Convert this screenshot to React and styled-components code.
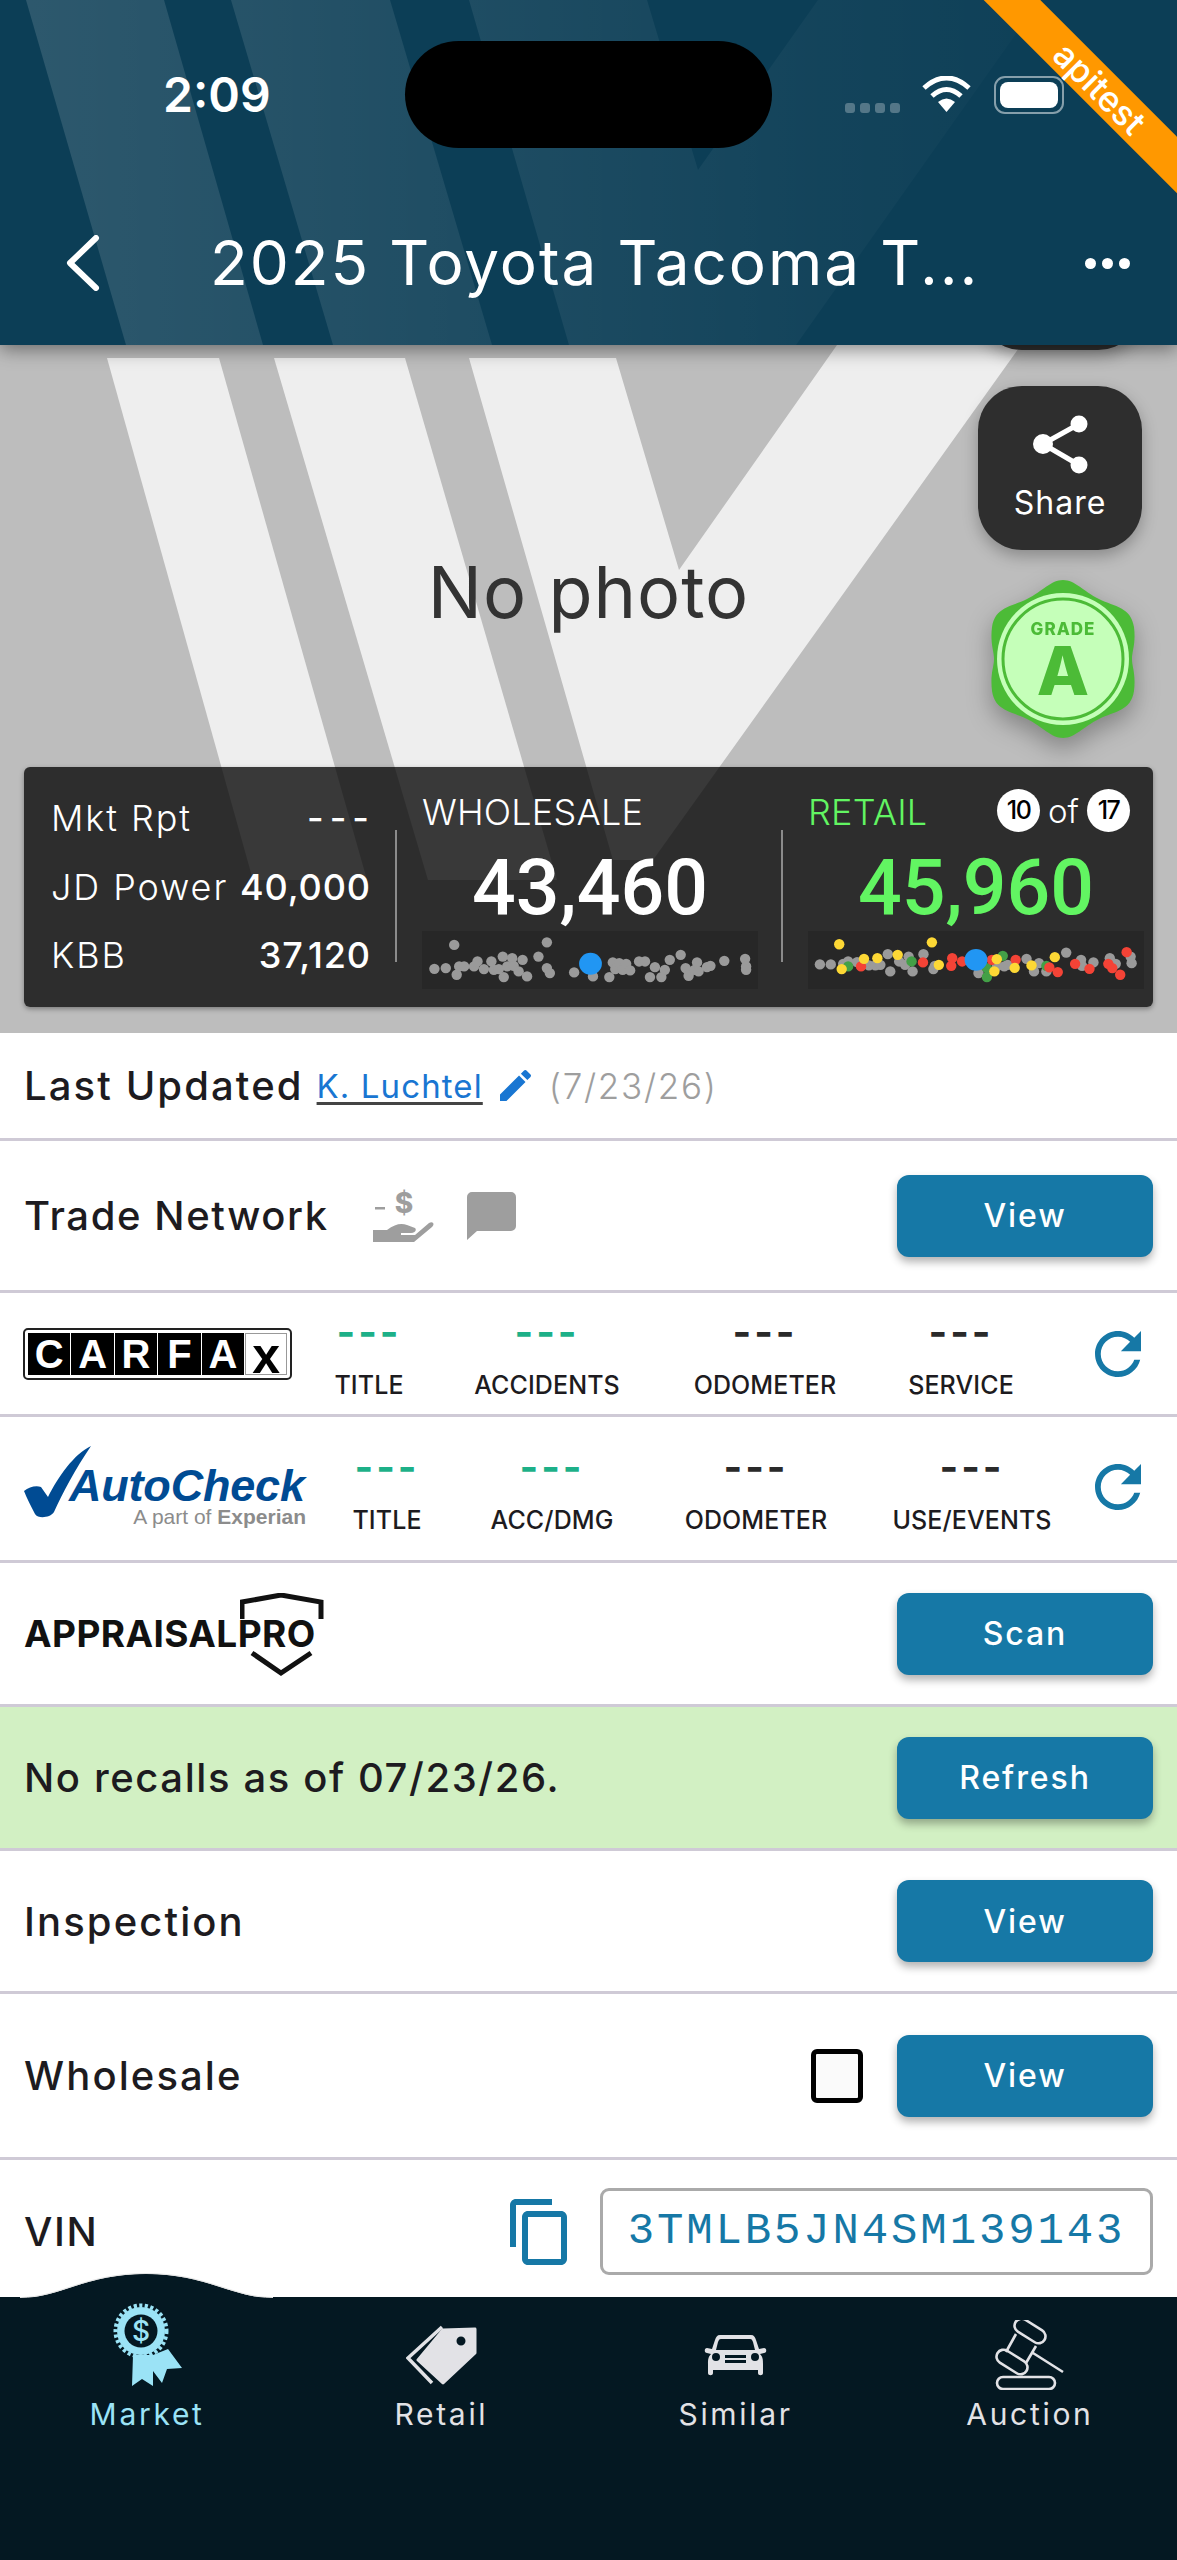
import React from "react";
import styled, { createGlobalStyle } from "styled-components";

const UI_FONT = `Inter, "Noto Sans", sans-serif`;
const BRAND_BLUE = "#1678a6";

const GlobalStyle = createGlobalStyle`
  html, body { margin: 0; padding: 0; background: #fff; }
  * { box-sizing: border-box; }
`;

const Screen = styled.div`
  position: relative;
  width: 1177px;
  height: 2560px;
  overflow: hidden;
  display: flex;
  flex-direction: column;
  background: #fff;
  font-family: ${UI_FONT};
  color: #1d1b20;
`;

/* ---------- header ---------- */
const Header = styled.header`
  position: relative;
  z-index: 2;
  height: 345px;
  flex: none;
  overflow: hidden;
  background: #0c3e56;
  box-shadow: 0 4px 18px rgba(0, 0, 0, 0.45);
`;
const Watermark = styled.svg`
  position: absolute;
  left: 0;
  top: 0;
`;
const StatusBar = styled.div`
  position: relative;
  height: 148px;
  padding-top: 41px;
  display: grid;
  grid-template-columns: 405px 367px 1fr;
`;
const Clock = styled.div`
  padding: 10px 0 0 163px;
  font-size: 48px;
  font-weight: 600;
  line-height: 88px;
  color: #fff;
`;
const Island = styled.div`
  height: 107px;
  border-radius: 54px;
  background: #000;
`;
const StatusIcons = styled.div`
  display: flex;
  align-items: flex-start;
  padding: 35px 0 0 73px;
`;
const SignalDots = styled.div`
  display: flex;
  gap: 5px;
  margin: 27px 22px 0 0;
`;
const SignalDot = styled.span`
  width: 10px;
  height: 10px;
  border-radius: 3px;
  background: rgba(255, 255, 255, 0.28);
`;
const Battery = styled.div`
  width: 70px;
  height: 38px;
  margin-left: 23px;
  padding: 4px;
  border: 2px solid rgba(255, 255, 255, 0.5);
  border-radius: 11px;
`;
const BatteryFill = styled.div`
  height: 100%;
  border-radius: 8px;
  background: #fff;
`;
const AppBar = styled.div`
  position: relative;
  display: flex;
  align-items: center;
  height: 197px;
  padding: 33px 47px 0 66px;
`;
const Title = styled.h1`
  flex: 1;
  margin: 0 0 0 110px;
  font-size: 62px;
  font-weight: 400;
  letter-spacing: 1.9px;
  line-height: 80px;
  white-space: nowrap;
  color: #fff;
`;
const MoreDots = styled.div`
  display: flex;
  gap: 6px;
`;
const MoreDot = styled.span`
  width: 11px;
  height: 11px;
  border-radius: 50%;
  background: #fff;
`;
const Ribbon = styled.div`
  position: absolute;
  left: 900px;
  top: 68px;
  width: 400px;
  height: 40px;
  transform: rotate(45deg);
  background: #ff9800;
  color: #fff;
  font-size: 35px;
  font-weight: 500;
  line-height: 40px;
  text-align: center;
`;

/* ---------- hero ---------- */
const Hero = styled.section`
  position: relative;
  height: 688px;
  flex: none;
  background: #bdbdbd;
`;
const NoPhoto = styled.div`
  position: absolute;
  left: 0;
  right: 0;
  top: 198px;
  text-align: center;
  font-size: 72px;
  letter-spacing: 1px;
  line-height: 98px;
  color: #333;
`;
const FloatStack = styled.div`
  position: absolute;
  right: 35px;
  top: -159px;
  width: 164px;
  display: flex;
  flex-direction: column;
  align-items: center;
`;
const FloatButton = styled.div`
  width: 164px;
  height: 164px;
  margin-bottom: ${(p) => p.$gap}px;
  padding-top: 29px;
  border-radius: 44px;
  background: #2e2e2e;
  box-shadow: 0 6px 16px rgba(0, 0, 0, 0.28);
  display: flex;
  flex-direction: column;
  align-items: center;
  color: #fff;
  font-size: 32px;
  font-weight: 400;
  letter-spacing: 1px;
`;
const FloatLabel = styled.span`
  margin-top: 8px;
  line-height: 40px;
`;
const GradeSeal = styled.svg`
  margin-left: 6px;
  filter: drop-shadow(0 10px 12px rgba(0, 0, 0, 0.3));
`;
const PricePanel = styled.div`
  position: absolute;
  left: 24px;
  right: 24px;
  top: 422px;
  height: 240px;
  border-radius: 6px;
  background: rgba(0, 0, 0, 0.76);
  box-shadow: 0 2px 5px rgba(0, 0, 0, 0.35);
  display: flex;
  color: #fff;
`;
const Sources = styled.div`
  width: 371px;
  flex: none;
  padding: 17px 25px 0 27px;
`;
const SourceRow = styled.div`
  display: flex;
  justify-content: space-between;
  align-items: center;
  height: 68.5px;
  font-size: 36px;
  font-weight: 300;
  letter-spacing: 1.9px;
  white-space: nowrap;
`;
const SourceValue = styled.span`
  font-weight: 500;
  letter-spacing: ${(p) => (p.$dashes ? 6 : 0.9)}px;
  margin-right: ${(p) => (p.$dashes ? -5 : -1)}px;
`;
const PanelRule = styled.div`
  width: 2px;
  height: 132px;
  margin-top: 63px;
  flex: none;
  background: #8b8b8b;
`;
const PriceColumn = styled.div`
  position: relative;
  width: ${(p) => p.$width}px;
  flex: none;
  padding: 22px 0 0 ${(p) => p.$inset}px;
  color: ${(p) => p.$color};
`;
const PriceHeading = styled.div`
  display: flex;
  align-items: center;
  height: 46px;
  font-size: 36px;
  font-weight: 300;
  letter-spacing: 0.2px;
`;
const PriceValue = styled.div`
  width: 336px;
  margin-top: 16px;
  font-family: Roboto, sans-serif;
  font-size: 77px;
  font-weight: 500;
  line-height: 74px;
  text-align: center;
`;
const ScatterStrip = styled.svg`
  display: block;
  margin-top: 6px;
  background: #272727;
`;
const RankBadge = styled.div`
  position: absolute;
  top: 22px;
  right: 23px;
  display: flex;
  align-items: center;
  gap: 8px;
  color: #fff;
  font-size: 33px;
  font-weight: 300;
`;
const RankCount = styled.span`
  width: 43px;
  height: 43px;
  border-radius: 50%;
  background: #fff;
  color: #000;
  font-size: 25px;
  font-weight: 500;
  letter-spacing: -1.5px;
  line-height: 43px;
  text-align: center;
`;

/* ---------- list rows ---------- */
const Row = styled.div`
  display: flex;
  align-items: center;
  height: ${(p) => p.$height}px;
  flex: none;
  padding: ${(p) => p.$top ?? 0}px ${(p) => p.$right ?? 24}px 0 24px;
  background: ${(p) => p.$tint ?? "#fff"};
  border-bottom: ${(p) => (p.$last ? "0" : "3px solid #cfcad6")};
`;
const RowLabel = styled.span`
  font-size: 40px;
  font-weight: 500;
  letter-spacing: ${(p) => p.$spacing ?? 1.6}px;
  white-space: nowrap;
`;
const Spacer = styled.div`
  flex: 1;
`;
const ActionButton = styled.button`
  width: 256px;
  height: 82px;
  flex: none;
  padding: 0;
  border: 0;
  border-radius: 12px;
  background: ${BRAND_BLUE};
  box-shadow: 0 5px 9px rgba(0, 0, 0, 0.3);
  color: #fff;
  font-family: ${UI_FONT};
  font-size: 32px;
  font-weight: 500;
  letter-spacing: 1.9px;
`;
const UpdatedBy = styled.a`
  margin-left: 13px;
  color: #1976d2;
  font-size: 33px;
  letter-spacing: 1.1px;
  text-decoration: underline;
  text-decoration-color: #444;
  text-underline-offset: 4px;
`;
const UpdatedDate = styled.span`
  margin-left: 18px;
  color: #9e9e9e;
  font-size: 35px;
  font-weight: 300;
  letter-spacing: 1.7px;
`;
const IconSvg = styled.svg`
  flex: none;
  margin-left: ${(p) => p.$left ?? 0}px;
`;

const ReportCol = styled.div`
  width: ${(p) => p.$width}px;
  flex: none;
  padding-top: 12px;
  display: flex;
  flex-direction: column;
  align-items: center;
`;
const Dash = styled.div`
  height: 30px;
  margin-bottom: 21px;
  color: ${(p) => (p.$good ? "#1db088" : "#2a2a2a")};
  font-size: 40px;
  font-weight: 700;
  letter-spacing: 3px;
  line-height: 26px;
`;
const ReportLabel = styled.div`
  font-size: 25px;
  font-weight: 500;
  letter-spacing: 0.1px;
  line-height: 30px;
  white-space: nowrap;
`;
const RefreshButton = styled.svg`
  margin-left: auto;
  margin-top: ${(p) => p.$offset}px;
  flex: none;
  fill: ${BRAND_BLUE};
`;

const CarfaxLogo = styled.div`
  width: 269px;
  height: 52px;
  margin-left: -1px;
  flex: none;
  padding: 3px;
  display: flex;
  gap: 1px;
  border: 2px solid #222;
  border-radius: 5px;
  background: #fff;
`;
const CarfaxCell = styled.span`
  flex: ${(p) => (p.$light ? "0 0 42px" : "1")};
  display: flex;
  align-items: ${(p) => (p.$light ? "flex-end" : "center")};
  justify-content: center;
  overflow: hidden;
  background: ${(p) => (p.$light ? "#fff" : "#000")};
  border: ${(p) => (p.$light ? "1px solid #999" : "0")};
  color: ${(p) => (p.$light ? "#000" : "#fff")};
  font-family: "Liberation Sans", sans-serif;
  font-size: ${(p) => (p.$light ? 50 : 40)}px;
  font-weight: 700;
  line-height: ${(p) => (p.$light ? "36px" : "1")};
`;

const AutoCheckLogo = styled.div`
  position: relative;
  width: 284px;
  height: 82px;
  flex: none;
  margin-top: -4px;
`;
const AutoCheckName = styled.div`
  position: absolute;
  left: 45px;
  top: 15px;
  color: #004b93;
  font-family: "Liberation Sans", sans-serif;
  font-size: 45px;
  font-style: italic;
  font-weight: 700;
  line-height: 50px;
  letter-spacing: -0.2px;
`;
const ExperianLine = styled.div`
  position: absolute;
  right: 2px;
  top: 58px;
  color: #8c8c8c;
  font-family: "Liberation Sans", sans-serif;
  font-size: 21px;
  line-height: 26px;
  white-space: nowrap;
  b { font-weight: 700; }
`;
const AppraisalLogo = styled.div`
  position: relative;
  width: 300px;
  height: 82px;
  display: flex;
  align-items: center;
  font-family: Inter, sans-serif;
  font-size: 37px;
  font-weight: 700;
  color: #111;
  letter-spacing: 0.4px;
  white-space: nowrap;
`;
const ShieldMark = styled.svg`
  position: absolute;
  left: 216px;
  top: 0;
`;

const Checkbox = styled.span`
  width: 52px;
  height: 54px;
  margin-right: 34px;
  border: 5px solid #000;
  border-radius: 6px;
  background: #fafafa;
`;
const VinField = styled.div`
  width: 553px;
  height: 87px;
  margin-left: 33px;
  border: 3px solid #aaa;
  border-radius: 9px;
  text-align: center;
  color: ${BRAND_BLUE};
  font-family: "Liberation Mono", monospace;
  font-size: 44px;
  letter-spacing: 2.85px;
  line-height: 81px;
`;

/* ---------- bottom nav ---------- */
const BottomNav = styled.nav`
  position: absolute;
  left: 0;
  right: 0;
  top: 2297px;
  height: 263px;
  z-index: 3;
  background: #041822;
  display: grid;
  grid-template-columns: repeat(4, 1fr);
  align-items: start;
`;
const NavBump = styled.svg`
  position: absolute;
  left: 0;
  top: -24px;
`;
const NavItem = styled.div`
  position: relative;
  display: flex;
  flex-direction: column;
  align-items: center;
  color: ${(p) => (p.$active ? "#9be3f6" : "#e2e2e6")};
`;
const NavIconSlot = styled.div`
  height: 95px;
  padding-top: ${(p) => (p.$active ? 0 : 21)}px;
  display: flex;
  align-items: center;
`;
const NavLabel = styled.span`
  font-size: 30px;
  font-weight: 400;
  letter-spacing: 2.7px;
  line-height: 44px;
`;

/* ---------- data ---------- */
const WHOLESALE_DOTS = [
  [105,555],[292,547],[65,627],[88,625],[110,645],[115,620],[125,620],[145,620],[152,605],[165,628],
  [180,605],[185,630],[195,628],[203,590],[205,652],[212,620],[222,595],[225,618],[235,635],[243,600],
  [252,650],[275,590],[292,625],[298,640],[347,638],[385,650],[418,652],[425,608],[430,628],[438,610],
  [445,630],[452,612],[460,632],[478,605],[490,605],[510,622],[500,652],[523,652],[530,630],[540,600],
  [562,585],[572,625],[578,648],[590,630],[595,608],[598,635],[615,622],[622,618],[650,603],[692,597],
  [694,620],[694,630],
];
const RETAIL_GRAY = [
  [843,614],[865,614],[890,612],[900,605],[918,607],[942,617],[955,617],[965,615],[980,583],[985,635],
  [1003,605],[1015,615],[1022,590],[1030,635],[1052,583],[1075,618],[1072,628],[1163,640],[1200,620],
  [1215,620],[1222,615],[1260,597],[1275,635],[1285,610],[1300,635],[1340,578],[1370,600],[1372,618],
  [1395,608],[1428,595],[1470,590],[1472,610],[1440,612],
];
const RETAIL_GREEN = [[1180,652],[1180,625],[1212,588],[900,620],[1028,605],[1300,618]];
const RETAIL_RED = [
  [926,620],[1051,608],[1110,595],[1108,618],[1130,605],[1190,600],[1238,600],[1306,623],[1323,637],
  [1358,612],[1387,627],[1425,612],[1433,625],[1449,645],[1462,577],
];
const RETAIL_YELLOW = [
  [882,553],[1069,547],[887,628],[932,597],[959,595],[1000,585],[1083,615],[1195,635],[1236,624],
  [1270,617],[1317,592],[1200,598],
];

const Dots = ({ points, color }) =>
  points.map(([x, y]) => (
    <ellipse key={`${x}-${y}`} cx={x} cy={y} rx={10.5} ry={15.5} fill={color} />
  ));

const WholesaleScatter = () => (
  <ScatterStrip width={336} height={58} viewBox="40 513 678 175" preserveAspectRatio="none">
    <Dots points={WHOLESALE_DOTS} color="#9a9a9a" />
    <ellipse cx={380} cy={612} rx={23} ry={33} fill="#2196f3" />
  </ScatterStrip>
);
const RetailScatter = () => (
  <ScatterStrip width={336} height={58} viewBox="819 513 678 175" preserveAspectRatio="none">
    <Dots points={RETAIL_GRAY} color="#9a9a9a" />
    <Dots points={RETAIL_GREEN} color="#43a047" />
    <Dots points={RETAIL_RED} color="#f44336" />
    <Dots points={RETAIL_YELLOW} color="#fdd835" />
    <ellipse cx={1158} cy={600} rx={23} ry={33} fill="#2196f3" />
  </ScatterStrip>
);

const HeaderWatermark = () => (
  <Watermark width={1177} height={345}>
    <defs>
      <linearGradient id="hdrW" x1="0" x2="1177" y1="0" y2="0" gradientUnits="userSpaceOnUse">
        <stop offset="0" stopColor="#fff" stopOpacity="0.14" />
        <stop offset="0.7" stopColor="#fff" stopOpacity="0.03" />
        <stop offset="1" stopColor="#fff" stopOpacity="0" />
      </linearGradient>
    </defs>
    <polygon fill="url(#hdrW)" points="26,0 164,0 263,345 126,345" />
    <polygon fill="url(#hdrW)" points="231,0 390,0 492,345 333,345" />
    <polygon fill="url(#hdrW)" points="469,0 647,0 698,170 818,0 1040,0 796,345 569,345" />
  </Watermark>
);

const HeroWatermark = () => (
  <Watermark width={1177} height={688} fill="#eee">
    <polygon points="107,13 219,13 367,535 253,535" />
    <polygon points="274,13 405,13 557,535 428,535" />
    <polygon points="469,13 616,13 679,225 837,0 1021,0 653,515 613,515" />
  </Watermark>
);

const WifiIcon = () => (
  <svg width={49} height={36} viewBox="0 0 49 36" fill="none" stroke="#fff" strokeWidth={5}>
    <path d="M2 12Q24.5-8 47 12" />
    <path d="M10 20Q24.5 7 39 20" />
    <path d="M16 26Q24.5 19 33 26L24.5 36Z" fill="#fff" stroke="none" />
  </svg>
);

const ShareIcon = () => (
  <svg width={56} height={60} viewBox="0 0 56 60" fill="#fff" stroke="#fff" strokeWidth={5}>
    <line x1={11} y1={29} x2={47} y2={9} />
    <line x1={11} y1={29} x2={47} y2={50} />
    <circle cx={11} cy={29} r={7.5} />
    <circle cx={47} cy={9} r={6} />
    <circle cx={47} cy={50} r={6} />
  </svg>
);

const GradeBadge = () => (
  <GradeSeal width={144} height={158} viewBox="-72 -79 144 158">
    <path
      fill="#4cbb37"
      d="M0-79C12-79 20-68 36-60C52-52 68-52 71-32C73-15 69-8 69 0C69 8 73 15 71 32C68 52 52 52 36 60C20 68 12 79 0 79C-12 79-20 68-36 60C-52 52-68 52-71 32C-73 15-69 8-69 0C-69-8-73-15-71-32C-68-52-52-52-36-60C-20-68-12-79 0-79Z"
    />
    <circle r={66} fill="#c5ffb9" />
    <circle r={60} fill="none" stroke="#4cbb37" strokeWidth={3} />
    <text y={-24} textAnchor="middle" fontFamily="Inter, sans-serif" fontWeight={800} fontSize={17} letterSpacing={1} fill="#4cbb37">
      GRADE
    </text>
    <text y={36} textAnchor="middle" fontFamily="Inter, sans-serif" fontWeight={800} fontSize={68} fill="#4cbb37">
      A
    </text>
  </GradeSeal>
);

const RefreshIcon = ({ offset }) => (
  <RefreshButton $offset={offset} width={46} height={46} viewBox="4 4 16 16">
    <path d="M17.65 6.35C16.2 4.9 14.21 4 12 4c-4.42 0-7.99 3.58-7.99 8s3.57 8 7.99 8c3.73 0 6.84-2.55 7.73-6h-2.08c-.82 2.33-3.04 4-5.65 4-3.31 0-6-2.69-6-6s2.69-6 6-6c1.66 0 3.14.69 4.22 1.78L13 11h7V4l-2.35 2.35z" />
  </RefreshButton>
);

const MarketIcon = () => (
  <svg width={69} height={84} viewBox="0 0 69 84" fill="#9be3f6">
    <polygon points="20,52 19,83 29,76 40,83 40,52" />
    <polygon points="40,68 49,80 54,66 69,65 55,46 40,52" />
    <circle cx={28} cy={28} r={24} />
    <circle cx={28} cy={28} r={25.5} fill="none" stroke="#9be3f6" strokeWidth={4} strokeDasharray="3.2 2.4" />
    <circle cx={28} cy={28} r={16.5} fill="#041822" />
    <text x={28} y={38} textAnchor="middle" fontFamily="Inter, sans-serif" fontWeight={500} fontSize={28}>
      $
    </text>
  </svg>
);

const TagIcon = () => (
  <svg width={71} height={60} viewBox="0 0 71 60">
    <path
      fill="#e2e2e6"
      fillRule="evenodd"
      stroke="#e2e2e6"
      strokeWidth={3}
      strokeLinejoin="round"
      d="M37 5L69 4V28L37 58L12 35ZM55 10A6 6 0 1 0 55 22A6 6 0 1 0 55 10Z"
    />
    <path d="M36 2L2 33L26 58" fill="none" stroke="#e2e2e6" strokeWidth={3.5} />
  </svg>
);

const CarIcon = () => (
  <svg width={63} height={42} viewBox="0 0 63 42">
    <path
      fill="#e2e2e6"
      fillRule="evenodd"
      d="M16 1H47C50 1 51 3 52 6L55 15L60 14C63 14 63 19 60 19L56 20C59 23 59 26 59 30V39C59 42 54 42 54 39V36H9V39C9 42 4 42 4 39V30C4 26 4 23 7 20L3 19C0 19 0 14 3 14L8 15L11 6C12 3 13 1 16 1ZM17 5C15 5 15 6 14 8L12 16H51L49 8C48 6 48 5 46 5ZM12 19A4 4 0 1 0 12 27A4 4 0 1 0 12 19ZM51 19A4 4 0 1 0 51 27A4 4 0 1 0 51 19ZM21 21V24H42V21ZM21 26V29H42V26Z"
    />
  </svg>
);

const GavelIcon = () => (
  <svg width={69} height={70} viewBox="0 0 69 70" fill="none" stroke="#e2e2e6" strokeWidth={2.6}>
    <rect x={2} y={57} width={58} height={12} rx={6} />
    <rect x={18} y={4} width={34} height={14} rx={7} transform="rotate(32 35 11)" />
    <rect x={0} y={35} width={34} height={14} rx={7} transform="rotate(32 17 42)" />
    <path d="M21 14L11 32M41 26L31 43M38 33L68 52" />
  </svg>
);

const HandMoneyIcon = () => (
  <IconSvg $left={44} width={61} height={54} viewBox="0 0 61 54" fill="#9e9e9e">
    <rect x={2} y={18} width={10} height={2.5} />
    <text x={31} y={24} textAnchor="middle" fontFamily="Inter, sans-serif" fontWeight={800} fontSize={28}>
      $
    </text>
    <path d="M0 41H14C22 35 28 34 34 36L42 39C44 41 42 44 38 44L28 44V46L42 46L56 34C60 32 62 35 59 38L41 53H0Z" />
  </IconSvg>
);

const ChatIcon = () => (
  <IconSvg $left={33} width={49} height={48} viewBox="0 0 49 48" fill="#9e9e9e">
    <path d="M5 0H44A5 5 0 0 1 49 5V34A5 5 0 0 1 44 39H10L0 48V5A5 5 0 0 1 5 0Z" />
  </IconSvg>
);

const PencilIcon = () => (
  <IconSvg $left={17} width={31} height={31} viewBox="3 3 18 18" fill="#1976d2">
    <path d="M3 17.25V21h3.75L17.81 9.94l-3.75-3.75L3 17.25zM20.71 7.04c.39-.39.39-1.02 0-1.41l-2.34-2.34c-.39-.39-1.02-.39-1.41 0l-1.83 1.83 3.75 3.75 1.83-1.83z" />
  </IconSvg>
);

const CopyIcon = () => (
  <IconSvg width={57} height={66} viewBox="2 1 19 22" fill={BRAND_BLUE}>
    <path d="M16 1H4c-1.1 0-2 .9-2 2v14h2V3h12V1zm3 4H8c-1.1 0-2 .9-2 2v14c0 1.1.9 2 2 2h11c1.1 0 2-.9 2-2V7c0-1.1-.9-2-2-2zm0 16H8V7h11v14z" />
  </IconSvg>
);

const Report = ({ width, good, label }) => (
  <ReportCol $width={width}>
    <Dash $good={good}>---</Dash>
    <ReportLabel>{label}</ReportLabel>
  </ReportCol>
);

const App = () => (
  <Screen>
    <GlobalStyle />
    <Header>
      <HeaderWatermark />
      <StatusBar>
        <Clock>2:09</Clock>
        <Island />
        <StatusIcons>
          <SignalDots>
            <SignalDot />
            <SignalDot />
            <SignalDot />
            <SignalDot />
          </SignalDots>
          <WifiIcon />
          <Battery>
            <BatteryFill />
          </Battery>
        </StatusIcons>
      </StatusBar>
      <AppBar>
        <svg width={34} height={56} viewBox="0 0 34 56" fill="none" stroke="#fff" strokeWidth={6} strokeLinecap="round" strokeLinejoin="round">
          <path d="M30 3L4 28L30 53" />
        </svg>
        <Title>2025 Toyota Tacoma T...</Title>
        <MoreDots>
          <MoreDot />
          <MoreDot />
          <MoreDot />
        </MoreDots>
      </AppBar>
      <Ribbon>apitest</Ribbon>
    </Header>

    <Hero>
      <HeroWatermark />
      <NoPhoto>No photo</NoPhoto>
      <FloatStack>
        <FloatButton $gap={36} />
        <FloatButton $gap={30}>
          <ShareIcon />
          <FloatLabel>Share</FloatLabel>
        </FloatButton>
        <GradeBadge />
      </FloatStack>
      <PricePanel>
        <Sources>
          <SourceRow>
            <span>Mkt Rpt</span>
            <SourceValue $dashes>---</SourceValue>
          </SourceRow>
          <SourceRow>
            <span>JD Power</span>
            <SourceValue>40,000</SourceValue>
          </SourceRow>
          <SourceRow>
            <span>KBB</span>
            <SourceValue>37,120</SourceValue>
          </SourceRow>
        </Sources>
        <PanelRule />
        <PriceColumn $width={384} $inset={25} $color="#fff">
          <PriceHeading>WHOLESALE</PriceHeading>
          <PriceValue>43,460</PriceValue>
          <WholesaleScatter />
        </PriceColumn>
        <PanelRule />
        <PriceColumn $width={370} $inset={25} $color="#62f562">
          <PriceHeading>RETAIL</PriceHeading>
          <PriceValue>45,960</PriceValue>
          <RetailScatter />
          <RankBadge>
            <RankCount>10</RankCount>
            of
            <RankCount>17</RankCount>
          </RankBadge>
        </PriceColumn>
      </PricePanel>
    </Hero>

    <Row $height={108}>
      <RowLabel $spacing={2.1}>Last Updated</RowLabel>
      <UpdatedBy>K. Luchtel</UpdatedBy>
      <PencilIcon />
      <UpdatedDate>(7/23/26)</UpdatedDate>
    </Row>
    <Row $height={152}>
      <RowLabel>Trade Network</RowLabel>
      <HandMoneyIcon />
      <ChatIcon />
      <Spacer />
      <ActionButton>View</ActionButton>
    </Row>
    <Row $height={124} $right={36}>
      <CarfaxLogo>
        <CarfaxCell>C</CarfaxCell>
        <CarfaxCell>A</CarfaxCell>
        <CarfaxCell>R</CarfaxCell>
        <CarfaxCell>F</CarfaxCell>
        <CarfaxCell>A</CarfaxCell>
        <CarfaxCell $light>x</CarfaxCell>
      </CarfaxLogo>
      <Report width={154} good label="TITLE" />
      <Report width={202} good label="ACCIDENTS" />
      <Report width={234} label="ODOMETER" />
      <Report width={158} label="SERVICE" />
      <RefreshIcon offset={0} />
    </Row>
    <Row $height={146} $right={36}>
      <AutoCheckLogo>
        <svg width={68} height={72} viewBox="0 0 68 72" fill="#004b93">
          <path d="M0 45C5 41 12 39 17 41L24 51C34 31 50 8 67 0C52 22 38 48 30 66C26 72 14 73 11 68C7 60 3 53 0 45Z" />
        </svg>
        <AutoCheckName>AutoCheck</AutoCheckName>
        <ExperianLine>
          A part of <b>Experian</b>
        </ExperianLine>
      </AutoCheckLogo>
      <Report width={158} good label="TITLE" />
      <Report width={172} good label="ACC/DMG" />
      <Report width={236} label="ODOMETER" />
      <Report width={196} label="USE/EVENTS" />
      <RefreshIcon offset={-3} />
    </Row>
    <Row $height={144}>
      <AppraisalLogo>
        APPRAISALPRO
        <ShieldMark width={84} height={84} viewBox="0 0 84 84" fill="none" stroke="#111" strokeWidth={5}>
          <path d="M2 26V9L41 2L81 9V26" />
          <path d="M12 60L41 80L71 60" />
        </ShieldMark>
      </AppraisalLogo>
      <Spacer />
      <ActionButton>Scan</ActionButton>
    </Row>
    <Row $height={144} $tint="#d2f0c3">
      <RowLabel>No recalls as of 07/23/26.</RowLabel>
      <Spacer />
      <ActionButton>Refresh</ActionButton>
    </Row>
    <Row $height={143}>
      <RowLabel $spacing={2.1}>Inspection</RowLabel>
      <Spacer />
      <ActionButton>View</ActionButton>
    </Row>
    <Row $height={166}>
      <RowLabel $spacing={2.1}>Wholesale</RowLabel>
      <Spacer />
      <Checkbox />
      <ActionButton>View</ActionButton>
    </Row>
    <Row $height={137} $last $top={6}>
      <RowLabel>VIN</RowLabel>
      <Spacer />
      <CopyIcon />
      <VinField>3TMLB5JN4SM139143</VinField>
    </Row>

    <BottomNav>
      <NavBump width={300} height={25} viewBox="0 0 300 25">
        <path d="M20 25C60 25 85 1 146 1C207 1 232 25 273 25Z" fill="#041822" />
        <path d="M20 24.5C60 24.5 85 .5 146 .5C207 .5 232 24.5 273 24.5" fill="none" stroke="#e4e4e4" strokeWidth={1} />
      </NavBump>
      <NavItem $active>
        <NavIconSlot $active>
          <MarketIcon />
        </NavIconSlot>
        <NavLabel>Market</NavLabel>
      </NavItem>
      <NavItem>
        <NavIconSlot>
          <TagIcon />
        </NavIconSlot>
        <NavLabel>Retail</NavLabel>
      </NavItem>
      <NavItem>
        <NavIconSlot>
          <CarIcon />
        </NavIconSlot>
        <NavLabel>Similar</NavLabel>
      </NavItem>
      <NavItem>
        <NavIconSlot>
          <GavelIcon />
        </NavIconSlot>
        <NavLabel>Auction</NavLabel>
      </NavItem>
    </BottomNav>
  </Screen>
);

export default App;
